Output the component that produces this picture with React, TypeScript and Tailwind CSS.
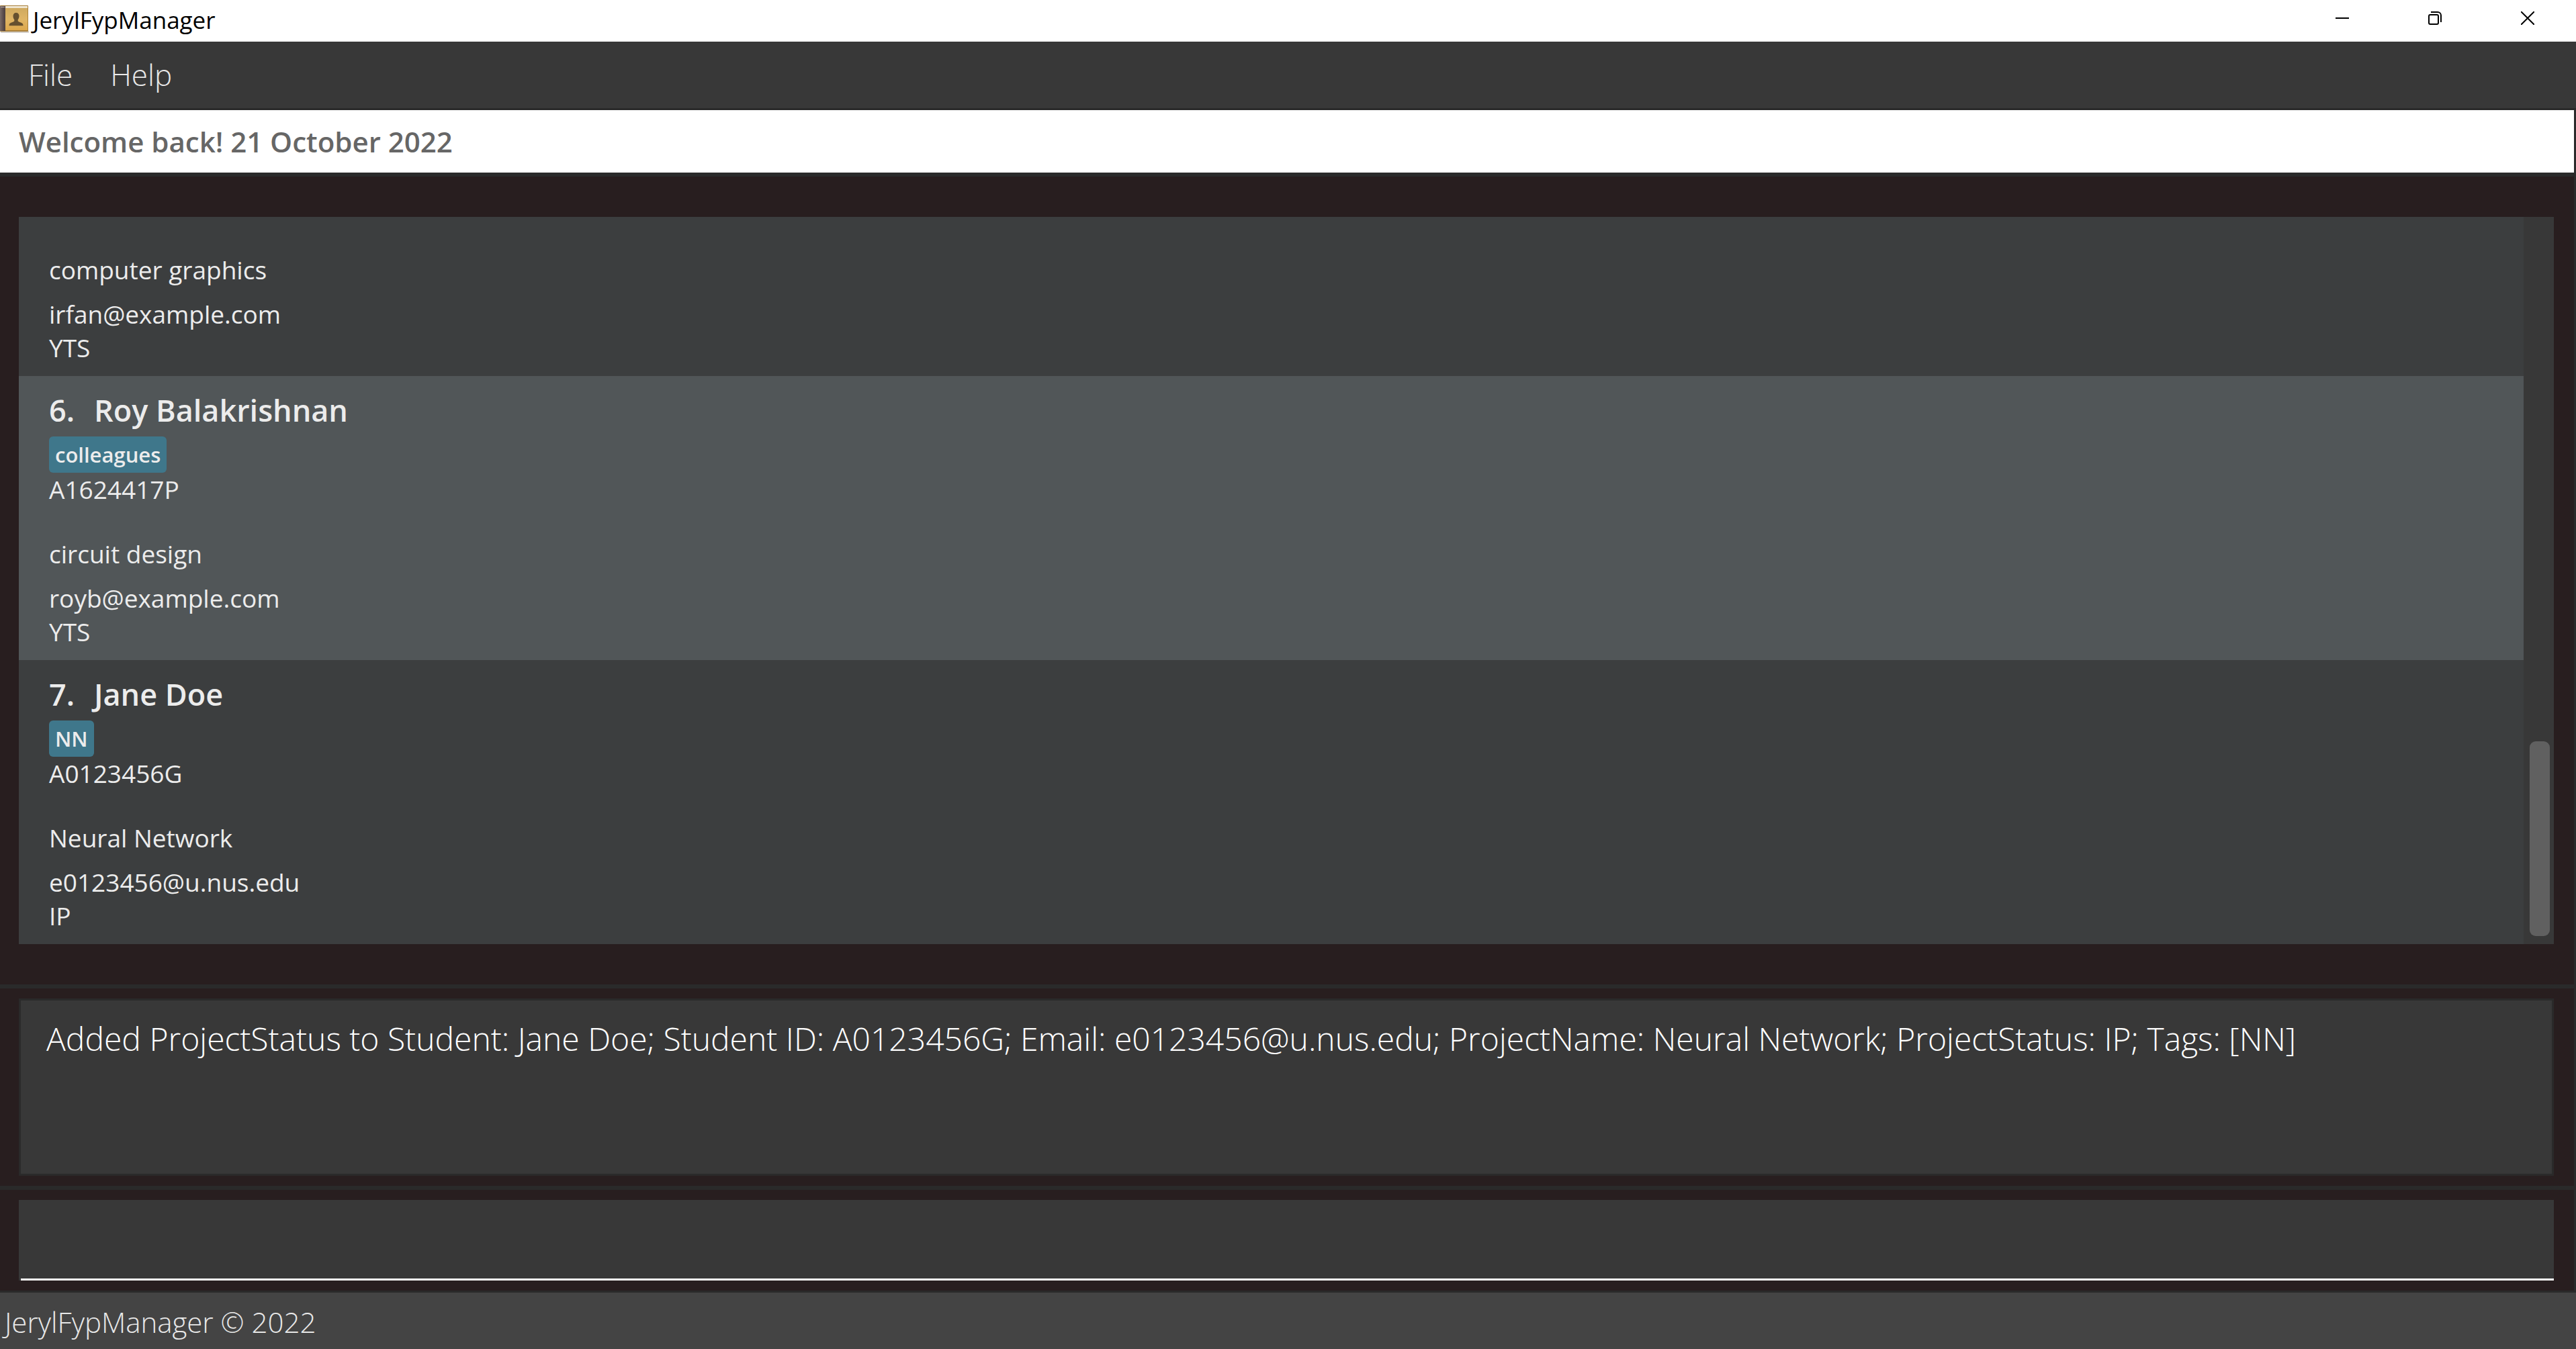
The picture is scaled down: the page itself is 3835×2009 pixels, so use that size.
import React from "react";

type Student = {
  index?: number;
  name?: string;
  tags?: string[];
  id?: string;
  project: string;
  email: string;
  status: string;
};

const students: Student[] = [
  { project: "computer graphics", email: "irfan@example.com", status: "YTS" },
  {
    index: 6,
    name: "Roy Balakrishnan",
    tags: ["colleagues"],
    id: "A1624417P",
    project: "circuit design",
    email: "royb@example.com",
    status: "YTS",
  },
  {
    index: 7,
    name: "Jane Doe",
    tags: ["NN"],
    id: "A0123456G",
    project: "Neural Network",
    email: "e0123456@u.nus.edu",
    status: "IP",
  },
];

const resultMessage =
  "Added ProjectStatus to Student: Jane Doe; Student ID: A0123456G; Email: e0123456@u.nus.edu; ProjectName: Neural Network; ProjectStatus: IP; Tags: [NN]";

function AppIcon() {
  return (
    <svg className="h-[42px] w-[43px]" viewBox="0 0 43 42" aria-hidden="true">
      <defs>
        <linearGradient id="cover" x1="0" y1="0" x2="0" y2="1">
          <stop offset="0" stopColor="#cfa95e" />
          <stop offset="0.5" stopColor="#dfb566" />
          <stop offset="1" stopColor="#dda84c" />
        </linearGradient>
        <linearGradient id="spine" x1="0" y1="0" x2="1" y2="0">
          <stop offset="0" stopColor="#7a6c68" />
          <stop offset="0.6" stopColor="#5a4c4c" />
          <stop offset="1" stopColor="#4c3f3e" />
        </linearGradient>
      </defs>
      <rect x="1" y="38" width="42" height="3" rx="1" fill="#d2cec9" />
      <rect x="0" y="0" width="42" height="39" rx="1" fill="#a8803c" />
      <rect x="8" y="1" width="33" height="3" fill="#efe6d2" />
      <rect x="8" y="4" width="33" height="33" fill="url(#cover)" />
      <rect x="0" y="1" width="8" height="37" fill="url(#spine)" />
      <rect x="1" y="2" width="6" height="1" fill="#b5aaa6" />
      <path
        d="M24 11c3 0 4.500 2 4.500 5 0 2.200-.8 4-1.800 5.200v2.300c1.500 1.500 5.300 2 6.800 3.400.8.800 1 2 1 3.400H13.500c0-1.400.2-2.600 1-3.400 1.500-1.400 5.300-1.900 6.800-3.400v-2.300c-1-1.200-1.800-3-1.800-5.200 0-3 1.500-5 4.500-5z"
        fill="#65502f"
      />
    </svg>
  );
}

function TitleBar() {
  const button = "flex h-[54px] w-[138px] items-center justify-center";
  return (
    <header className="flex h-[62px] shrink-0 justify-between bg-white pr-[3px] text-black">
      <div className="flex items-center gap-[6px] pb-1">
        <AppIcon />
        <h1 className="text-[35px] leading-[47px]">JerylFypManager</h1>
      </div>
      <div className="flex">
        <button className={button} aria-label="Minimize">
          <svg className="size-5" viewBox="0 0 20 20" fill="none" stroke="currentColor" strokeWidth="2">
            <path d="M0 10h20" />
          </svg>
        </button>
        <button className={button} aria-label="Restore">
          <svg className="size-5" viewBox="0 0 20 20" fill="none" stroke="currentColor" strokeWidth="2">
            <rect x="1" y="5" width="14" height="14" rx="2" />
            <path d="M4 1h10a5 5 0 0 1 5 5v10" />
          </svg>
        </button>
        <button className={button} aria-label="Close">
          <svg className="size-5" viewBox="0 0 20 20" fill="none" stroke="currentColor" strokeWidth="2">
            <path d="M0 0l20 20M20 0L0 20" />
          </svg>
        </button>
      </div>
    </header>
  );
}

function MenuBar() {
  return (
    <nav className="flex h-[102px] shrink-0 border-b-[3px] border-[#2a2a2a] bg-[#383838] pb-0.5 pl-[14px] text-[44px] font-light text-[#e8e8e8]">
      <button className="px-7">File</button>
      <button className="px-7">Help</button>
    </nav>
  );
}

function StudentCard({ student, selected }: { student: Student; selected: boolean }) {
  return (
    <li
      className={`px-[45px] pb-[17px] text-[37px] leading-[50px] text-[#ececec] ${selected ? "bg-[#515658]" : "bg-[#3c3e3f]"}`}
    >
      {student.name && (
        <>
          <h2 className="flex pt-[21px] text-[45px] leading-[60px] font-semibold">
            <span className="w-[67px]">{student.index}.</span>
            <span>{student.name}</span>
          </h2>
          <div className="mt-[9px] flex gap-2">
            {student.tags?.map((tag) => (
              <span
                key={tag}
                className="rounded-md bg-[#3f778b] px-[9px] text-[31px] leading-[54px] font-semibold"
              >
                {tag}
              </span>
            ))}
          </div>
          <p>{student.id}</p>
        </>
      )}
      <p className="mt-[46px]">{student.project}</p>
      <p className="mt-4">{student.email}</p>
      <p>{student.status}</p>
    </li>
  );
}

export default function App() {
  return (
    <div className="flex min-h-screen flex-col bg-[#2a2a2a] font-['Open_Sans',sans-serif]">
      <TitleBar />
      <MenuBar />
      <main className="flex flex-1 flex-col gap-[6px] pr-[3px] pb-[3px]">
        <p className="bg-white pl-7 text-[42px] leading-[93px] font-semibold text-[#666666]">
          Welcome back! 21 October 2022
        </p>

        <section className="flex flex-1 flex-col bg-[#281e1f] py-[60px] pr-[30px] pl-7">
          <div className="flex flex-1 bg-[#383838]">
            <ul className="flex flex-1 flex-col justify-end bg-[#3c3e3f]">
              {students.map((student) => (
                <StudentCard key={student.email} student={student} selected={student.index === 6} />
              ))}
            </ul>
            <div className="flex w-[45px] flex-col justify-end pr-[6px] pb-3 pl-[9px]">
              <div className="h-[290px] rounded-[9px] bg-[#606060]" />
            </div>
          </div>
        </section>

        <section className="flex bg-[#281e1f] py-[15px] pr-[30px] pl-7">
          <textarea
            readOnly
            aria-label="Result"
            className="h-[264px] flex-1 resize-none border-[3px] border-[#2a2a2a] bg-[#383838] px-[38px] py-6 text-[48px] leading-[65px] font-light text-white outline-none"
            value={resultMessage}
          />
        </section>

        <section className="bg-[#281e1f] py-[15px] pr-[30px] pl-7">
          <div className="flex bg-[#383838] pl-[3px]">
            <input
              type="text"
              aria-label="Command"
              className="h-[120px] flex-1 border-b-[3px] border-white bg-[#383838] px-[38px] text-[48px] font-light text-white outline-none"
            />
          </div>
        </section>
      </main>
      <footer className="bg-[#444444] px-[7px] pt-[15px] pb-3 text-[42px] leading-[57px] font-light text-[#e8e8e8]">
        JerylFypManager © 2022
      </footer>
    </div>
  );
}
